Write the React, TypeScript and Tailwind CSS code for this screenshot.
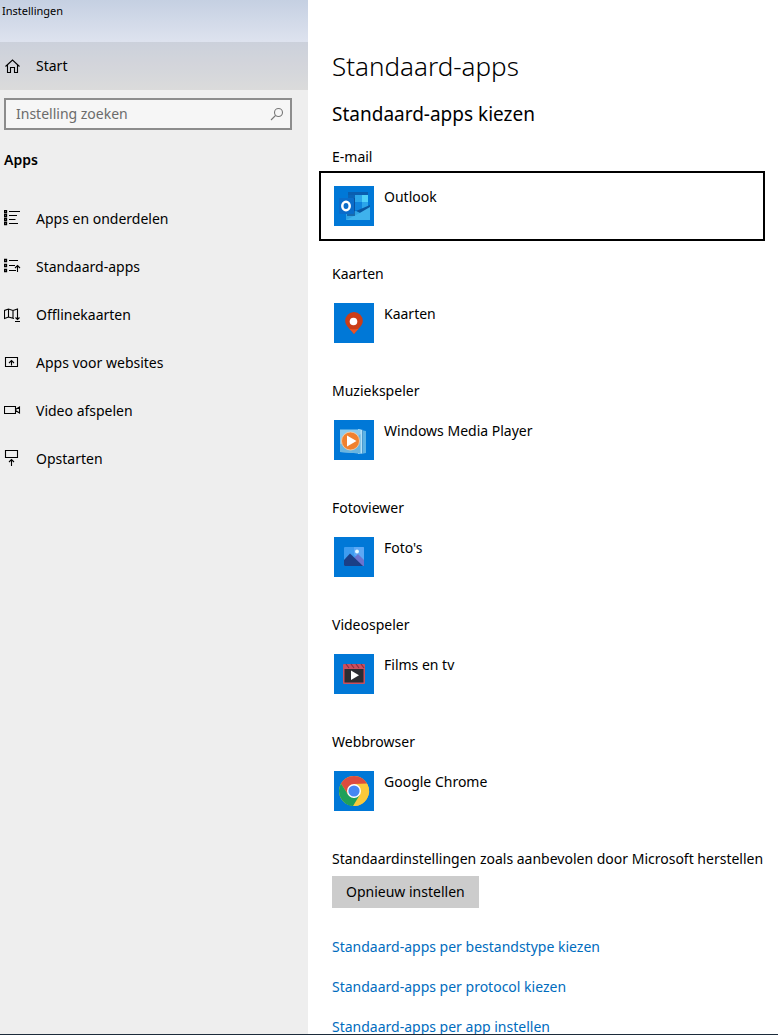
import type { ReactNode } from 'react';

const Glyph = ({ children }: { children: ReactNode }) => (
  <svg
    className="shrink-0"
    width="17"
    height="18"
    viewBox="0 0 17 18"
    fill="none"
    stroke="#000"
    strokeWidth="1.1"
    aria-hidden="true"
  >
    {children}
  </svg>
);

const Tile = ({ children }: { children: ReactNode }) => (
  <svg className="shrink-0" width="40" height="40" viewBox="0 0 40 40" aria-hidden="true">
    <rect width="40" height="40" fill="#0078d7" />
    {children}
  </svg>
);

const navItems = [
  {
    label: 'Apps en onderdelen',
    icon: (
      <Glyph>
        <path d="M.5.5h2v2h-2zM.5 4.5h2v2h-2zM.5 8.5h2v2h-2zM.5 12.5h2v2h-2z" strokeWidth="1.3" />
        <path d="M5 1.5h11M5 5.5h8M5 9.5h6.5M5 13.5h9" />
      </Glyph>
    ),
  },
  {
    label: 'Standaard-apps',
    icon: (
      <Glyph>
        <path d="M.5 1.5h2v2h-2zM.5 6.5h2v2h-2zM.5 11.5h2v2h-2z" strokeWidth="1.3" />
        <path d="M5 2.5h9M5 7.5h6M5 12.5h7M13.5 14V7.5M11 10l2.5-2.5L16 10" />
      </Glyph>
    ),
  },
  {
    label: 'Offlinekaarten',
    icon: (
      <Glyph>
        <path d="M10 12.5L4.5 11l-4 1.5v-8l4-1.5L9 4.5 13.5 3v4M4.5 3v8M9 4.5v8" />
        <path d="M13.5 7v6.5M11.500 11.5l2 2 2-2M11 15.5h5" />
      </Glyph>
    ),
  },
  {
    label: 'Apps voor websites',
    icon: (
      <Glyph>
        <path d="M1.5 3.5h12v9h-12zM7.500 11.500V6.5M5 9l2.5-2.5L10 9" />
      </Glyph>
    ),
  },
  {
    label: 'Video afspelen',
    icon: (
      <Glyph>
        <path d="M.5 4.5h11v7H.5zM11.5 7.5l4-2.500v6l-4-2.500" />
      </Glyph>
    ),
  },
  {
    label: 'Opstarten',
    icon: (
      <Glyph>
        <path d="M1.5.5h12v7h-12zM7.5 16V9.5M5 12l2.5-2.5L10 12" />
      </Glyph>
    ),
  },
];

const defaults = [
  {
    category: 'E-mail',
    app: 'Outlook',
    selected: true,
    icon: (
      <Tile>
        <path d="M14 6h20v3H14z" fill="#0a5eb0" />
        <path d="M14 9h7v16h-7z" fill="#0a64b8" />
        <path d="M21 9h7v7h-7z" fill="#2ba5ea" />
        <path d="M28 9h6v7h-6z" fill="#4fd0f8" />
        <path d="M21 16h7v8h-7z" fill="#0f83dc" />
        <path d="M28 16h6v8h-6z" fill="#2ba5ea" />
        <path d="M36 19v13L22 25z" fill="#0a56a0" />
        <path d="M12 27l10-2 14 7v2H12z" fill="#2fa3e4" />
        <path d="M36 21v13H12l12-6z" fill="#3fb2ec" />
        <path d="M13 12h8v18h-8z" fill="#0a458a" opacity=".6" />
        <rect x="5" y="12" width="15" height="16" rx="1" fill="#0a6cca" />
        <ellipse cx="12" cy="20" rx="3.7" ry="4.2" fill="none" stroke="#fff" strokeWidth="2.5" />
      </Tile>
    ),
  },
  {
    category: 'Kaarten',
    app: 'Kaarten',
    icon: (
      <Tile>
        <path d="M20 9a8.800 8.800 0 0 0-8.800 9c0 5 4.800 7.500 8.800 13 4-5.500 8.800-8 8.800-13A8.800 8.800 0 0 0 20 9z" fill="#cb3d17" />
        <path d="M15 25.500c2 .9 8 .9 10 0-1.800 1.900-3.500 3.500-5 5.500-1.500-2-3.200-3.600-5-5.500z" fill="#ea5426" />
        <circle cx="19.500" cy="18.500" r="3.800" fill="#fff" />
      </Tile>
    ),
  },
  {
    category: 'Muziekspeler',
    app: 'Windows Media Player',
    icon: (
      <Tile>
        <path d="M27 10l5 1v22l-5 1z" fill="#5cb3e6" />
        <path d="M24 9l5 1v23l-5 1z" fill="#b5e0f7" />
        <path d="M28.500 10v23.500" stroke="#2f87c4" strokeWidth=".8" />
        <path d="M6 9.500h20.500v24L6 32z" fill="#8ccbee" />
        <path d="M6 24c8 0 14-4 20.500-10v19.500L6 32z" fill="#69b5e0" />
        <circle cx="16.500" cy="21" r="9" fill="#f0812f" stroke="#fbd0a5" strokeWidth=".8" />
        <path d="M13 15.500v11l9.500-5.500z" fill="#fff" />
      </Tile>
    ),
  },
  {
    category: 'Fotoviewer',
    app: "Foto's",
    icon: (
      <Tile>
        <rect x="10" y="10" width="20" height="19" rx="1" fill="#3d9cf0" />
        <path d="M20 10h9a1 1 0 0 1 1 1v14l-10-7z" fill="#5da8f5" />
        <path d="M19 22l5-5 6 6v6H19z" fill="#6b74cf" />
        <path d="M10 23l6-6.500L29 29H11a1 1 0 0 1-1-1z" fill="#1b3f86" />
        <circle cx="23" cy="14.500" r="1.900" fill="#e8fbff" />
      </Tile>
    ),
  },
  {
    category: 'Videospeler',
    app: 'Films en tv',
    icon: (
      <Tile>
        <rect x="9" y="10" width="22" height="20" rx="1" fill="#c9505f" />
        <path d="M10.500 15h19v13.500h-19z" fill="#2c2c32" />
        <path d="M12 10l3 4M17 10l3 4M22 10l3 4M27 10l3 4" stroke="#8e2f40" strokeWidth="1.200" />
        <path d="M17 16.500v9.500l8-4.750z" fill="#fff" />
      </Tile>
    ),
  },
  {
    category: 'Webbrowser',
    app: 'Google Chrome',
    icon: (
      <Tile>
        <circle cx="20" cy="20" r="15" fill="#fbc93c" />
        <path d="M20 20l-5.900 3.400L7 12.500A15 15 0 0 1 33 12.500L20 13z" fill="#dd4b3e" />
        <path d="M20 13h13.300A15 15 0 0 1 19 35l7.200-11.500z" fill="#fbc93c" />
        <path d="M7 12.500A15 15 0 0 0 19 35l7-11.500-6 3.500-6-3.500z" fill="#1fa05a" />
        <circle cx="20" cy="20" r="7" fill="#fff" />
        <circle cx="20" cy="20" r="5.600" fill="#4587f3" />
      </Tile>
    ),
  },
];

const links = [
  'Standaard-apps per bestandstype kiezen',
  'Standaard-apps per protocol kiezen',
  'Standaard-apps per app instellen',
];

const Sidebar = () => (
  <aside className="w-[308px] shrink-0 bg-[#eeeeee]">
    <div className="bg-linear-to-b from-[#c5d0e2] via-[#dde2ee] via-45% to-[#eeeeee]">
      <div className="h-[42px] px-0.5 pt-[3px] text-[11px] leading-4">Instellingen</div>
      <a href="#start" className="flex h-12 items-center gap-[15px] bg-black/8 px-1">
        <Glyph>
          <path d="M1.5 9.5l7-6.500 7 6.500M3.5 8v7.500h3v-5h4v5h3V8" />
        </Glyph>
        Start
      </a>
    </div>
    <label className="mt-2 mr-4 ml-1 flex h-8 items-center border-2 border-[#8c8c8c] bg-[#f6f6f6] pr-1.5 pl-2.5">
      <input
        type="search"
        aria-label="Instelling zoeken"
        placeholder="Instelling zoeken"
        className="min-w-0 flex-1 bg-transparent outline-none placeholder:text-[#6b6b6b]"
      />
      <svg width="14" height="14" viewBox="0 0 14 14" fill="none" stroke="#777" strokeWidth="1.1" aria-hidden="true">
        <circle cx="8.500" cy="5.500" r="4" />
        <path d="M5.500 8.500L1 13" />
      </svg>
    </label>
    <h2 className="mt-5 px-1 font-semibold">Apps</h2>
    <nav className="mt-[25px]">
      {navItems.map((item) => (
        <a key={item.label} href="#" className="flex h-12 items-center gap-[15px] px-1">
          {item.icon}
          {item.label}
        </a>
      ))}
    </nav>
  </aside>
);

export default function App() {
  return (
    <div className="flex h-screen overflow-hidden border-b border-[#1c2b3a] bg-white font-['Noto_Sans','Open_Sans',sans-serif] text-sm leading-5 text-black">
      <Sidebar />
      <main className="min-w-0 flex-1 pt-12 pr-[13px] pl-6 whitespace-nowrap">
        <h1 className="text-[26px] leading-9 font-light">Standaard-apps</h1>
        <h2 className="mt-4 text-[19px] leading-7">Standaard-apps kiezen</h2>

        <div className="mt-[19px] flex flex-col gap-[23px]">
          {defaults.map((item) => (
            <section key={item.category}>
              <h3>{item.category}</h3>
              <div className="mt-1 -ml-[13px]">
                <button
                  type="button"
                  className={`flex w-full items-start gap-2.5 border-2 p-[13px] text-left ${
                    item.selected ? 'border-black' : 'border-transparent'
                  }`}
                >
                  {item.icon}
                  <span className="leading-[22px]">{item.app}</span>
                </button>
              </div>
            </section>
          ))}
        </div>

        <p className="mt-[23px]">Standaardinstellingen zoals aanbevolen door Microsoft herstellen</p>
        <button type="button" className="mt-[7px] h-8 bg-[#cccccc] px-3.5">
          Opnieuw instellen
        </button>

        <ul className="mt-[29px] flex flex-col gap-5">
          {links.map((text) => (
            <li key={text}>
              <a href="#" className="text-[#006cbe]">
                {text}
              </a>
            </li>
          ))}
        </ul>
      </main>
    </div>
  );
}
